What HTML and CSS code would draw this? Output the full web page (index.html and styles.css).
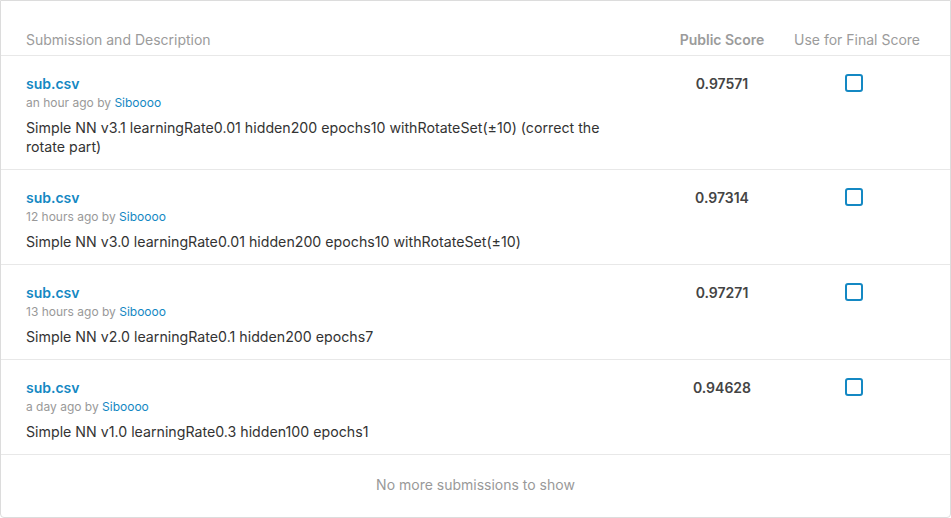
FILE: index.html
```html
<!DOCTYPE html>
<html>
<head>
<meta charset="utf-8">
<link rel="stylesheet" href="styles.css">
</head>
<body>
<div class="card">
  <div class="row head">
    <div class="c-desc">Submission and Description</div>
    <div class="c-score">Public Score</div>
    <div class="c-use">Use for Final Score</div>
  </div>
  <div class="row item">
    <div class="c-desc">
      <a class="file">sub.csv</a>
      <div class="meta">an hour ago by <a class="user">Siboooo</a></div>
      <div class="desc">Simple NN v3.1 learningRate0.01 hidden200 epochs10 withRotateSet(±10) (correct the rotate part)</div>
    </div>
    <div class="c-score score">0.97571</div>
    <div class="c-use"><span class="check"></span></div>
  </div>
  <div class="row item">
    <div class="c-desc">
      <a class="file">sub.csv</a>
      <div class="meta">12 hours ago by <a class="user">Siboooo</a></div>
      <div class="desc">Simple NN v3.0 learningRate0.01 hidden200 epochs10 withRotateSet(±10)</div>
    </div>
    <div class="c-score score">0.97314</div>
    <div class="c-use"><span class="check"></span></div>
  </div>
  <div class="row item">
    <div class="c-desc">
      <a class="file">sub.csv</a>
      <div class="meta">13 hours ago by <a class="user">Siboooo</a></div>
      <div class="desc">Simple NN v2.0 learningRate0.1 hidden200 epochs7</div>
    </div>
    <div class="c-score score">0.97271</div>
    <div class="c-use"><span class="check"></span></div>
  </div>
  <div class="row item">
    <div class="c-desc">
      <a class="file">sub.csv</a>
      <div class="meta">a day ago by <a class="user">Siboooo</a></div>
      <div class="desc">Simple NN v1.0 learningRate0.3 hidden100 epochs1</div>
    </div>
    <div class="c-score score">0.94628</div>
    <div class="c-use"><span class="check"></span></div>
  </div>
  <div class="foot">No more submissions to show</div>
</div>
</body>
</html>
```

FILE: styles.css
```css
html, body {
  margin: 0;
  padding: 0;
  background: #fff;
}
body {
  font-family: Inter, "Liberation Sans", sans-serif;
  color: #333;
}
.card {
  width: 949px;
  height: 516px;
  border: 1px solid #dcdcdc;
  border-radius: 0 0 4px 4px;
  display: flex;
  flex-direction: column;
}
.row {
  display: grid;
  grid-template-columns: 636px 120px 150px;
  padding: 0 18px 0 25px;
  border-bottom: 1px solid #e8e8e8;
}
.head {
  box-sizing: border-box;
  height: 55px;
  align-items: end;
  padding-bottom: 5px;
  font-size: 14px;
  line-height: 20px;
  color: #9b9b9b;
}
.head .c-score {
  font-weight: 600;
  text-align: center;
}
.head .c-use {
  text-align: center;
}
.item {
  padding-top: 18px;
  padding-bottom: 13px;
}
.c-desc {
  padding-right: 20px;
}
.file {
  display: block;
  font-size: 14px;
  line-height: 20px;
  font-weight: 600;
  color: #1488c3;
}
.meta {
  font-size: 12px;
  line-height: 18px;
  color: #999;
}
.user {
  color: #1488c3;
}
.desc {
  max-width: 600px;
  font-size: 14.2px;
  line-height: 19px;
  margin-top: 6px;
  color: #333;
}
.score {
  text-align: center;
  font-size: 14px;
  font-weight: 600;
  line-height: 20px;
  color: #444;
}
.c-use {
  display: flex;
  justify-content: center;
}
.check {
  display: block;
  width: 14px;
  height: 14px;
  border: 2px solid #1488c3;
  border-radius: 3px;
  margin-top: 0;
  margin-left: -6px;
}
.foot {
  flex: 1;
  display: flex;
  align-items: center;
  justify-content: center;
  padding-bottom: 4px;
  font-size: 14px;
  color: #999;
}
```
